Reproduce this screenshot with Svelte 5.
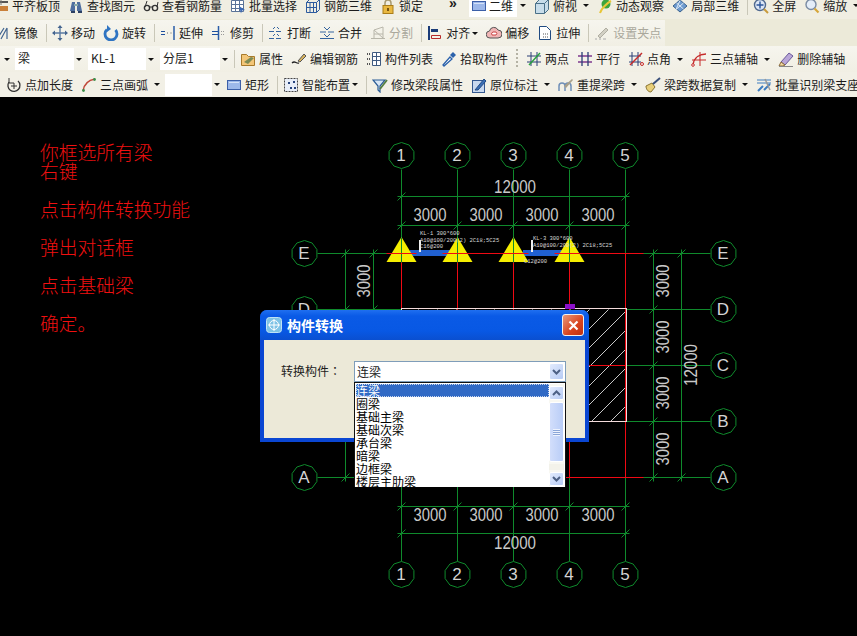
<script>
  // 16x16 toolbar icons, kept as plain svg markup
  const icons = {
    level: '<path d="M2 8h13v5H2z" fill="#c9803a"/><path d="M2 4h13" stroke="#555" stroke-width="2"/><path d="M8 1v6" stroke="#777"/>',
    binoc: '<path d="M2 13l2-9h3v9zM9 13V4h3l2 9z" fill="#4f6f9f"/><path d="M3 14h4M10 14h4" stroke="#2b3f63" stroke-width="2"/><path d="M6 7h4" stroke="#8aa" stroke-width="2"/>',
    glasses: '<circle cx="4" cy="10" r="2.6" fill="none" stroke="#333" stroke-width="1.4"/><circle cx="12" cy="10" r="2.6" fill="none" stroke="#333" stroke-width="1.4"/><path d="M6.5 9h3M2 9l2-6M14 9l1-5" stroke="#333"/>',
    batch: '<path d="M1.500 2.500h12v11h-12zM1.500 6.500h12M1.500 10.500h12M5.500 2.500v11M9.500 2.500v11" fill="#fff" stroke="#5a7398"/><path d="M9 8l6 4-3 .5-1 3z" fill="#3a69b5"/>',
    bar3d: '<path d="M1.500 4.500h10v10h-10zM1.500 4.500l3-3h10l-3 3M14.500 1.500v10l-3 3M5 4.500v10M8.500 4.500v10M1.500 9.500h10" fill="none" stroke="#2c5a9e"/>',
    lock: '<path d="M5 8V5a3 3 0 0 1 6 0v3" fill="none" stroke="#a89a70" stroke-width="1.500"/><rect x="3" y="7.500" width="10" height="8" fill="#e9b840" stroke="#aa7d18"/><path d="M8 10v3" stroke="#7a5510" stroke-width="2"/>',
    rect: '<rect x="1.500" y="3.500" width="13" height="9" fill="#9db8ea" stroke="#3c5fa8"/><path d="M3 5h10v1H3z" fill="#d5e2f8"/>',
    cube: '<path d="M1.500 5.500l4-4h9v10l-4 4h-9z" fill="#c8ddea" stroke="#4a7088"/><path d="M1.500 5.500h9v10M10.500 5.500l4-4" fill="none" stroke="#4a7088"/>',
    orbit: '<circle cx="9" cy="6" r="4.500" fill="#3da53d"/><path d="M3 15c1-4 7-10 11-12" stroke="#e8c638" stroke-width="2" fill="none"/>',
    part3d: '<path d="M1 8l7-6 7 6-7 6z" fill="#6f9cd0" stroke="#3a628f"/><path d="M4.500 5l7 6M8 2.500l-4 9M11.500 5l-7 6" stroke="#dce8f5"/>',
    zoomall: '<circle cx="7" cy="7" r="5.500" fill="#dce6f5" stroke="#50698f" stroke-width="1.400"/><path d="M7 3.500v7M3.500 7h7" stroke="#2c569b" stroke-width="1.400"/><path d="M11 11l4 4" stroke="#c89a3c" stroke-width="2"/>',
    zoom: '<circle cx="7" cy="6.500" r="5" fill="#e4edf8" stroke="#7a8ba3" stroke-width="1.400"/><path d="M10.500 10.500l4 4" stroke="#d6a63a" stroke-width="2.200"/>',
    mirror: '<path d="M2 14L9 3M6 14l6-11M12 14V3" stroke="#42648f" stroke-width="1.200" fill="none"/>',
    move: '<path d="M8 1v14M1 8h14" stroke="#5b7ba3" stroke-width="1.400"/><path d="M8 0l2.500 3h-5zM8 16l2.500-3h-5zM0 8l3-2.500v5zM16 8l-3-2.500v5z" fill="#44648f"/>',
    rotate: '<path d="M12.500 5a6 6 0 1 1-8.500-.5" fill="none" stroke="#2f74c2" stroke-width="2.800"/><path d="M4 0v7l4-3z" fill="#2f74c2"/>',
    extend: '<path d="M1 6.500h4M1 9.500h4" stroke="#1d4e9e"/><path d="M7 8h2M10.500 8h1.500" stroke="#666" stroke-dasharray="1 1"/><path d="M14 1v14" stroke="#2a5da8" stroke-width="1.500"/>',
    trim: '<path d="M1 6.500h6M1 9.500h6" stroke="#1d4e9e"/><path d="M7.500 1v14" stroke="#2a5da8" stroke-width="1.500"/><path d="M10 6.500h4M10 9.500h4" stroke="#999" stroke-dasharray="1 1"/>',
    cut: '<path d="M1 6.500h14M1 13.500h14" stroke="#35649f" stroke-dasharray="5 2"/><path d="M5 4l2-2M11 4L9 2M5 11l2-2M11 11L9 9" stroke="#35649f"/>',
    join: '<path d="M1 7h6M9 7h6M1 13.500h14" stroke="#35649f"/><path d="M5 2l3 3 3-3M5 9l3 3 3-3" stroke="#35649f" fill="none"/>',
    split: '<path d="M1 13.500h14M4 13V5l9-3v11M4 5l9 8M4 9h9" stroke="#b8b6aa" fill="none"/>',
    align: '<path d="M2 1v14" stroke="#1a3b78" stroke-width="2"/><path d="M4 4h7v3H4z" fill="#1a3b78"/><path d="M4.500 10.500h9v3h-9z" fill="none" stroke="#b72a2a"/>',
    offset: '<path d="M4 13a3.500 3.500 0 0 1-.5-7 4.500 4.500 0 0 1 8.500-1 4 4 0 0 1 0 8z" fill="#f0b5b5" stroke="#555"/><path d="M6 10a2 2 0 0 1 1-3h3a2 2 0 0 1 0 3z" fill="#fff" stroke="#c44"/>',
    stretch: '<path d="M2.500 1.500h7l4 4v9h-11z" fill="#fff" stroke="#1f4a82"/><path d="M6 9h6M6 12h6" stroke="#555" stroke-dasharray="1 1"/>',
    grippen: '<path d="M1 14h2M5 14h2M9 14h3" stroke="#aaa"/><path d="M4 11l8-8 2 2-8 8z" fill="#d2d0c4" stroke="#b0aea2"/>',
    prop: '<path d="M1.500 3.500h5l2 2h6v9h-13z" fill="#f3c678" stroke="#a87a2a"/><path d="M4 11l7-5 3 1-6 6z" fill="#7d8b55"/>',
    editbar: '<path d="M1 12c3-3 4 1 7 0" stroke="#222" fill="none" stroke-width="1.300"/><path d="M7 10l6-7 2 2-6 6z" fill="#d9b45e" stroke="#555"/>',
    list: '<path d="M1 3h3M1 8h3M1 13h3" stroke="#555" stroke-dasharray="1 1" stroke-width="2"/><path d="M6.500 1.500h8v13h-8zM6.500 5.500h8M6.500 9.500h8M10.500 1.500v13" fill="#fff" stroke="#3f5a80"/>',
    pick: '<path d="M2 14l7-8 2 2-8 7z" fill="#fff" stroke="#2c62ab" stroke-width="1.300"/><path d="M9 4l3-3 3 3-3 3z" fill="#2c62ab"/>',
    twopt: '<path d="M1 5h14M1 11h14M5 1v14M11 1v14" stroke="#2a3f77"/><path d="M3 14L14 2" stroke="#27a13d" stroke-width="1.400"/>',
    parallel: '<path d="M1 5h14M1 11h14" stroke="#7f3a8f" stroke-width="1.300"/><path d="M5 1v14M11 1v14" stroke="#2a3f77" stroke-width="1.300"/>',
    angle: '<path d="M1 5h12M1 11h12M4 1v14M10 1v14" stroke="#2a3f77"/><path d="M2 14L14 2" stroke="#c62a2a" stroke-width="1.400"/><circle cx="14" cy="13" r="1.500" fill="none" stroke="#c62a2a"/>',
    three: '<path d="M2 14C3 6 9 3 15 3" stroke="#c62a2a" fill="none" stroke-width="1.400"/><path d="M1 9h14M9 1v14" stroke="#c62a2a"/><circle cx="2" cy="14" r="1.300" fill="#fff" stroke="#c62a2a"/>',
    erase: '<path d="M3 11l8-9 4 3-8 9z" fill="#b9a6d8" stroke="#6a5a9a"/><path d="M3 11l4 3-2 1H1z" fill="#f0d8a0" stroke="#8a6a3a"/><path d="M1 15.500h14" stroke="#888"/>',
    addlen: '<path d="M3 5a6 6 0 1 0 9-1" fill="none" stroke="#333" stroke-width="1.300"/><path d="M8 6v6M5 9h6" stroke="#333"/><path d="M3 1v5h5" fill="none" stroke="#333"/>',
    arc: '<path d="M2 14C3 7 8 3 14 2" fill="none" stroke="#c0483a" stroke-width="1.500"/><circle cx="2.500" cy="13.500" r="1.400" fill="#3b8f4a"/><circle cx="13.500" cy="2.500" r="1.400" fill="#3b8f4a"/>',
    smart: '<rect x="1.500" y="1.500" width="13" height="13" fill="#e8eef8" stroke="#444" stroke-dasharray="2 1"/><path d="M5 5h2v2H5zM10 4h2v2h-2zM7 10h2v2H7zM11 10h2v2h-2z" fill="#25427a"/>',
    editseg: '<path d="M1 3h12L8 9v6L6 13V9z" fill="#d8e6f5" stroke="#2b5c95" stroke-width="1.200"/><path d="M8 12l7-9" stroke="#557f3f" stroke-width="1.800"/>',
    inplace: '<rect x="1.500" y="3.500" width="12" height="12" fill="#c8d8ee" stroke="#33578f"/><path d="M4 13l9-11 2 2-8 9z" fill="#3b6fb5" stroke="#244c85"/>',
    respan: '<path d="M1 14V9a3 3 0 0 1 6 0v5M7 14V9a3 3 0 0 1 6 0v5" fill="none" stroke="#6f8fb8" stroke-width="1.500"/><path d="M6 9l8-7 1 1-7 8z" fill="#a9a08a"/>',
    brush: '<path d="M1 9l6-3 3 4-4 5c-3 0-5-3-5-6z" fill="#e8cf7a" stroke="#8a7430"/><path d="M8 7l7-6" stroke="#3a4f7a" stroke-width="2"/>',
    batchid: '<path d="M2 14l5-5M8 13l6-6" stroke="#3c7cc0" stroke-width="2"/><path d="M1 3h14M1 6h14" stroke="#3c7cc0"/><path d="M9 2l5 11" stroke="#999" stroke-width="1.500"/>'
  };

  const it = (i, t, caret = false, off = false, near = false) => ({ kind: 'item', i, t, caret, off, near });
  const sep = { kind: 'sep' };

  const rows = [
    [it('level', '平齐板顶'), it('binoc', '查找图元'), it('glasses', '查看钢筋量'), it('batch', '批量选择'), it('bar3d', '钢筋三维'), it('lock', '锁定'),
      { kind: 'more' }, { kind: 'view' }, it('cube', '俯视', true), it('orbit', '动态观察'), it('part3d', '局部三维'), sep, it('zoomall', '全屏'), it('zoom', '缩放', true)],
    [it('mirror', '镜像'), sep, it('move', '移动'), it('rotate', '旋转'), sep, it('extend', '延伸'), it('trim', '修剪'), sep, it('cut', '打断'), it('join', '合并'),
      it('split', '分割', false, true), sep, it('align', '对齐', true, false, true), it('offset', '偏移'), it('stretch', '拉伸'), sep, it('grippen', '设置夹点', false, true)],
    [{ kind: 'combo', t: '梁', w: 88, lead: true }, { kind: 'combo', t: 'KL-1', w: 72 }, { kind: 'combo', t: '分层1', w: 74 }, sep, it('prop', '属性'), it('editbar', '编辑钢筋'), it('list', '构件列表'), it('pick', '拾取构件'), { kind: 'grip' },
      it('twopt', '两点'), it('parallel', '平行'), it('angle', '点角', true), it('three', '三点辅轴', true), it('erase', '删除辅轴')],
    [it('addlen', '点加长度'), it('arc', '三点画弧', true), { kind: 'combo', t: '', w: 61, tight: true }, it('rect', '矩形'), sep, it('smart', '智能布置', true, false, true), sep, it('editseg', '修改梁段属性'), it('inplace', '原位标注', true), it('respan', '重提梁跨', true), it('brush', '梁跨数据复制', true), it('batchid', '批量识别梁支座')]
  ];

  const notes = [
    ['你框选所有梁', 160], ['右键', 179], ['点击构件转换功能', 217], ['弹出对话框', 255], ['点击基础梁', 293], ['确定。', 331]
  ];

  const xs = [401, 457, 513, 569, 625];
  const ys = [253, 309, 365, 421, 477];
  const rowNames = ['E', 'D', 'C', 'B', 'A'];
  const midX = [430, 486, 542, 598];
  const midY = [281, 337, 393, 449];
  const hatch = Array.from({ length: 20 }, (_, k) => 708 + k * 19);

  function bubble(cx, cy, r = 13) {
    const pts = [];
    for (let a = 0; a < 10; a++) {
      const t = (a * Math.PI) / 5 + Math.PI / 10;
      pts.push(`${(cx + r * Math.cos(t)).toFixed(1)},${(cy + r * Math.sin(t)).toFixed(1)}`);
    }
    return pts.join(' ');
  }

  const listItems = ['连梁', '圈梁', '基础主梁', '基础次梁', '承台梁', '暗梁', '边框梁', '楼层主肋梁'];
</script>

{#snippet tick(x, y)}
  <line x1={x - 4} y1={y + 4} x2={x + 4} y2={y - 4} />
{/snippet}

{#snippet dim(x, y, t, w, vertical)}
  {#if vertical}
    <text class="dim" x={0} y={0} textLength={w} lengthAdjust="spacingAndGlyphs" text-anchor="middle" dominant-baseline="central" transform="translate({x} {y}) rotate(-90)">{t}</text>
  {:else}
    <text class="dim" {x} {y} textLength={w} lengthAdjust="spacingAndGlyphs" text-anchor="middle" dominant-baseline="central">{t}</text>
  {/if}
{/snippet}

<div class="app">
  <div class="toolbar">
    {#each rows as row, r}
      <div class="row row{r}">
        {#each row as b}
          {#if b.kind === 'item'}
            <div class="item" class:off={b.off}>
              <svg class="ico" width="16" height="16" viewBox="0 0 16 16">{@html icons[b.i]}</svg>
              <span>{b.t}</span>
              {#if b.caret}<i class="caret" class:near={b.near}></i>{/if}
            </div>
          {:else if b.kind === 'sep'}
            <div class="sep"></div>
          {:else if b.kind === 'grip'}
            <div class="grip"></div>
          {:else if b.kind === 'more'}
            <div class="more">»</div>
          {:else if b.kind === 'view'}
            <div class="view">
              <div class="field">
                <svg class="ico" width="16" height="16" viewBox="0 0 16 16">{@html icons.rect}</svg>
                <span>二维</span>
              </div>
              <i class="caret"></i>
            </div>
          {:else if b.kind === 'combo'}
            <div class="combo" class:tight={b.tight} style="width: {b.w}px">
              {#if b.lead}<i class="caret lead"></i>{/if}
              <div class="field">{b.t}</div>
              <i class="caret"></i>
            </div>
          {/if}
        {/each}
      </div>
    {/each}
  </div>

  <div class="canvas">
    <svg class="drawing" width="857" height="539" viewBox="0 97 857 539">
      {#each notes as [t, y]}
        <text class="note" x="40" {y}>{t}</text>
      {/each}

      <g transform="translate(0.5 0.5)">
        <!-- grid: green outside the slab, red inside -->
        <g stroke="#0f8a2c" fill="none">
          {#each xs as x}
            <line x1={x} y1="169" x2={x} y2="253" />
            <line x1={x} y1="477" x2={x} y2="561" />
          {/each}
          {#each ys as y}
            <line x1="317" y1={y} x2="401" y2={y} />
            <line x1="625" y1={y} x2="710" y2={y} />
          {/each}
          <line x1="397" y1="196" x2="629" y2="196" />
          <line x1="397" y1="225" x2="629" y2="225" />
          <line x1="397" y1="506" x2="629" y2="506" />
          <line x1="397" y1="533" x2="629" y2="533" />
          <line x1="345" y1="249" x2="345" y2="481" />
          <line x1="373" y1="249" x2="373" y2="481" />
          <line x1="653" y1="249" x2="653" y2="481" />
          <line x1="681" y1="249" x2="681" y2="481" />
          {#each xs as x}
            {@render tick(x, 225)}
            {@render tick(x, 506)}
          {/each}
          {#each [401, 625] as x}
            {@render tick(x, 196)}
            {@render tick(x, 533)}
          {/each}
          {#each ys as y}
            {@render tick(345, y)}
            {@render tick(373, y)}
            {@render tick(653, y)}
          {/each}
          {#each [253, 477] as y}
            {@render tick(681, y)}
          {/each}
        </g>

        <clipPath id="slab"><rect x="401" y="309" width="225" height="112" /></clipPath>
        <g clip-path="url(#slab)" stroke="#c8c8c8">
          {#each hatch as s}
            <line x1="400" y1={s - 400} x2="640" y2={s - 640} />
          {/each}
        </g>

        <g stroke="#f00a14" fill="none">
          {#each xs as x}
            <line x1={x} y1="253" x2={x} y2="477" />
          {/each}
          {#each [253, 477] as y}
            <line x1="401" y1={y} x2="643" y2={y} />
          {/each}
          <line x1="401" y1="365" x2="625" y2="365" />
        </g>
        <rect x="401" y="308" width="225" height="113" fill="none" stroke="#f4dcdc" />
      </g>

      <rect x="565" y="304" width="10" height="5" fill="#8a10c8" />

      <!-- beams and supports -->
      <rect x="410" y="250" width="44" height="6" fill="#2060d0" />
      <rect x="523" y="250" width="44" height="6" fill="#2060d0" />
      <rect x="419" y="240" width="2" height="12" fill="#f0f0f0" />
      <rect x="531" y="240" width="2" height="12" fill="#f0f0f0" />
      {#each xs.slice(0, 4) as x}
        <polygon points="{x + 0.5},237 {x + 15.5},262 {x - 14.5},262" fill="#f5ee00" />
        <g transform="translate(0.5 0.5)">
          <line x1={x} y1="237" x2={x} y2="262" stroke="#0f8a2c" />
          <line x1={x - 15} y1="253" x2={x + 15} y2="253" stroke="#f00a14" />
        </g>
      {/each}

      <g class="tag">
        <text x="420" y="235">KL-1 300*600</text>
        <text x="420" y="241.500">A10@100/200(2) 2C18;5C25</text>
        <text x="420" y="248">C16@200</text>
        <text x="533" y="240">KL-3 300*600</text>
        <text x="533" y="246.500">A10@100/200(2) 2C18;5C25</text>
        <text x="524" y="263">C12@200</text>
      </g>

      <!-- axis bubbles -->
      {#each xs as x, i}
        <polygon class="bub" points={bubble(x + 0.5, 155.5)} />
        <text class="axis" {x} y="155">{i + 1}</text>
        <polygon class="bub" points={bubble(x + 0.5, 574.5)} />
        <text class="axis" {x} y="574">{i + 1}</text>
      {/each}
      {#each ys as y, i}
        <polygon class="bub" points={bubble(304.5, y + 0.5)} />
        <text class="axis" x="304" {y}>{rowNames[i]}</text>
        <polygon class="bub" points={bubble(723.5, y + 0.5)} />
        <text class="axis" x="723" {y}>{rowNames[i]}</text>
      {/each}

      <!-- dimensions -->
      {@render dim(515, 187, '12000', 42, false)}
      {@render dim(515, 543, '12000', 42, false)}
      {@render dim(691, 365, '12000', 42, true)}
      {#each midX as x}
        {@render dim(x, 215, '3000', 33, false)}
        {@render dim(x, 515, '3000', 33, false)}
      {/each}
      {#each midY as y}
        {@render dim(663, y, '3000', 33, true)}
      {/each}
      {@render dim(364, 281, '3000', 33, true)}
    </svg>

    <div class="dialog">
      <div class="title">
        <svg width="16" height="16" viewBox="0 0 16 16">
          <rect x="0.500" y="0.500" width="15" height="15" rx="3" fill="#7fc3e6" stroke="#bfe3f5" />
          <circle cx="8" cy="8" r="4.500" fill="none" stroke="#fff" />
          <path d="M8 2v12M2 8h12" stroke="#fff" />
        </svg>
        <span>构件转换</span>
        <div class="close">
          <svg width="11" height="11" viewBox="0 0 11 11"><path d="M1.500 1.500l8 8M9.500 1.500l-8 8" stroke="#fff" stroke-width="2.200" /></svg>
        </div>
      </div>
      <div class="body">
        <label for="type">转换构件：</label>
        <div class="select" id="type">
          <span>连梁</span>
          <div class="sbtn">
            <svg width="9" height="6" viewBox="0 0 9 6"><path d="M1 1l3.500 3.500L8 1" fill="none" stroke="#4d6185" stroke-width="2" /></svg>
          </div>
        </div>
      </div>
    </div>

    <div class="list">
      <ul>
        {#each listItems as t, i}
          <li class:sel={i === 0}>{t}</li>
        {/each}
      </ul>
      <div class="bar">
        <div class="sbtn">
          <svg width="9" height="6" viewBox="0 0 9 6"><path d="M1 5l3.500-3.500L8 5" fill="none" stroke="#4d6185" stroke-width="2" /></svg>
        </div>
        <div class="thumb"><b></b></div>
        <div class="track"></div>
        <div class="sbtn">
          <svg width="9" height="6" viewBox="0 0 9 6"><path d="M1 1l3.500 3.500L8 1" fill="none" stroke="#4d6185" stroke-width="2" /></svg>
        </div>
      </div>
    </div>
  </div>
</div>

<style>
  :global(body) {
    background: #000;
  }

  .app {
    width: 857px;
    height: 636px;
    overflow: hidden;
    font-family: "Noto Sans CJK SC", "Liberation Sans", sans-serif;
    font-size: 12px;
    color: #1c1c1c;
  }

  /* toolbar */
  .toolbar {
    height: 97px;
    overflow: hidden;
    background: #ecead9;
  }

  .row {
    display: flex;
    align-items: center;
    gap: 8px;
    height: 26px;
    white-space: nowrap;
    background: linear-gradient(#f6f5ee, #f1efe4);
  }

  .row0 {
    height: 19px;
    padding: 0 0 8px;
    margin-left: -7px;
    box-sizing: border-box;
    background: #f0eee2;
  }

  .row1 {
    margin: 1px 192px 0 -5px;
  }

  .row3 {
    height: 25px;
    padding-left: 6px;
    background: #f2f0e6;
  }

  .item {
    display: flex;
    align-items: center;
    gap: 3px;
    flex: none;
    line-height: 16px;
  }

  .item.off {
    color: #aaa89c;
  }

  .ico {
    flex: none;
  }

  .caret {
    display: block;
    flex: none;
    width: 0;
    height: 0;
    margin-left: 3px;
    border: 3px solid transparent;
    border-top: 3px solid #111;
    border-bottom: 0;
  }

  .caret.near {
    margin-left: -1px;
  }

  .sep {
    flex: none;
    width: 1px;
    height: 18px;
    margin-right: -3px;
    background: #c9c7b8;
  }

  .grip {
    flex: none;
    width: 2px;
    height: 20px;
    background: repeating-linear-gradient(#b5b3a5 0 2px, transparent 2px 4px);
  }

  .more {
    flex: none;
    width: 20px;
    margin: 0 0 6px 18px;
    font-family: "Liberation Sans", sans-serif;
    font-size: 14px;
    line-height: 10px;
    font-weight: 700;
  }

  .view {
    display: flex;
    align-items: center;
    flex: none;
    margin-left: -8px;
  }

  .view .field {
    display: flex;
    align-items: center;
    gap: 2px;
    width: 48px;
    height: 22px;
    padding-left: 2px;
    box-sizing: border-box;
    background: #fff;
  }

  .combo {
    display: flex;
    align-items: center;
    flex: none;
    margin-right: -8px;
  }

  .combo.tight {
    margin-left: -3px;
  }

  .combo .field {
    flex: 1;
    height: 22px;
    padding-left: 3px;
    line-height: 20px;
    background: #fff;
    overflow: hidden;
  }

  .combo .caret {
    margin: 0 6px 0 2px;
  }

  .combo .caret.lead {
    margin: 0 5px 0 4px;
  }

  /* drawing */
  .canvas {
    position: relative;
    height: 539px;
    background: #000;
  }

  .drawing {
    display: block;
  }

  .note {
    font-size: 18.750px;
    font-weight: 300;
    fill: #f01010;
  }

  .dim {
    font-family: "Liberation Sans", sans-serif;
    font-size: 18px;
    fill: #c9c9c9;
  }

  .axis {
    font-family: "Liberation Sans", sans-serif;
    font-size: 17px;
    fill: #d4d4d4;
    text-anchor: middle;
    dominant-baseline: central;
  }

  .bub {
    fill: #000;
    stroke: #0f8a2c;
  }

  .tag {
    font-family: "Liberation Mono", monospace;
    font-size: 5.500px;
    fill: #d8d8d8;
  }

  /* dialog */
  .dialog {
    position: absolute;
    left: 260px;
    top: 213px;
    width: 329px;
    height: 132px;
    box-sizing: border-box;
    padding: 0 4px 4px;
    border-radius: 7px 7px 0 0;
    background: #0a46d2;
    display: flex;
    flex-direction: column;
  }

  .title {
    display: flex;
    align-items: center;
    gap: 5px;
    height: 30px;
    margin: 0 -4px;
    padding: 0 5px 0 6px;
    flex: none;
    border-radius: 7px 7px 0 0;
    background: linear-gradient(#1f6ff0 0, #0a5ae6 20%, #0858e4 70%, #0a4fd0 100%);
    color: #fff;
    font-size: 14px;
    font-weight: 700;
  }

  .close {
    display: flex;
    align-items: center;
    justify-content: center;
    width: 20px;
    height: 20px;
    margin-left: auto;
    border: 1px solid #f4f0ec;
    border-radius: 3px;
    background: linear-gradient(135deg, #e8987a, #d8431e 60%, #c03010);
  }

  .body {
    flex: 1;
    display: flex;
    align-items: flex-start;
    gap: 13px;
    padding: 21px 0 0 17px;
    background: #ece9d8;
  }

  label {
    line-height: 20px;
    font-family: "Noto Sans CJK TC", "Noto Sans CJK SC", sans-serif;
  }

  .select {
    display: flex;
    align-items: center;
    justify-content: space-between;
    width: 212px;
    height: 21px;
    box-sizing: border-box;
    padding: 0 1px 0 2px;
    border: 1px solid #7f9db9;
    background: #fff;
  }

  .sbtn {
    display: flex;
    align-items: center;
    justify-content: center;
    flex: none;
    width: 15px;
    height: 17px;
    border: 1px solid #fff;
    box-sizing: border-box;
    border-radius: 2px;
    background: linear-gradient(135deg, #e2ebfd, #b6cbf5);
  }

  .bar .sbtn {
    height: 14px;
  }

  .list {
    position: absolute;
    left: 354px;
    top: 285px;
    display: flex;
    width: 212px;
    height: 105px;
    box-sizing: border-box;
    padding: 1px 1px 0;
    border: 1px solid #111;
    border-width: 1px 1px 0;
    background: #fff;
    overflow: hidden;
  }

  ul {
    flex: 1;
    margin: 0;
    padding: 0;
    list-style: none;
    color: #000;
  }

  li {
    height: 13px;
    line-height: 13px;
  }

  li.sel {
    background: #316ac5;
    color: #fff;
    outline: 1px dotted #c9d6ee;
    outline-offset: -1px;
  }

  .bar {
    display: flex;
    flex-direction: column;
    flex: none;
    width: 15px;
    height: 102px;
    box-sizing: border-box;
    padding-top: 2px;
    gap: 2px;
    background: #f8f8f2;
  }

  .thumb {
    display: flex;
    align-items: center;
    justify-content: center;
    flex: none;
    height: 60px;
    border: 1px solid #fff;
    border-radius: 2px;
    box-sizing: border-box;
    background: linear-gradient(90deg, #d2defb, #b9cdf7);
  }

  .thumb b {
    display: block;
    width: 7px;
    height: 7px;
    background: repeating-linear-gradient(#eef3fe 0 1px, #8ba6d8 1px 2px);
  }

  .track {
    flex: 1;
    background: #f3f2ea;
  }
</style>
